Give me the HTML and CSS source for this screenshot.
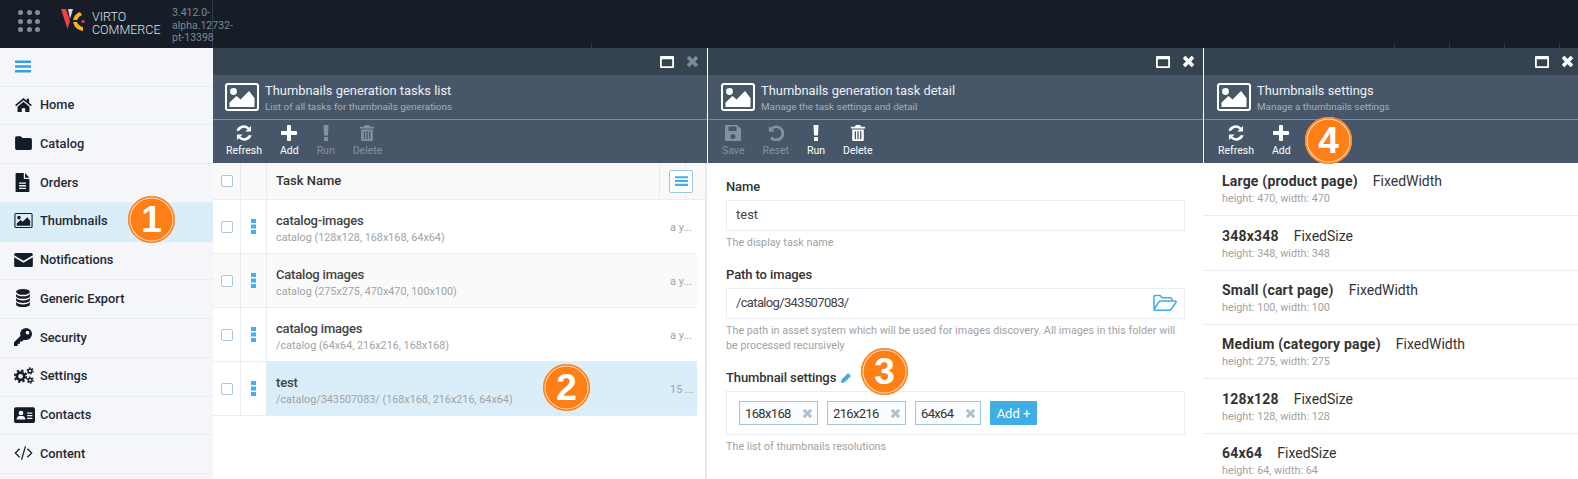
FILE: index.html
```html
<!DOCTYPE html>
<html lang="en">
<head>
<meta charset="utf-8">
<title>Thumbnails</title>
<link rel="stylesheet" href="styles.css">
</head>
<body>
<svg class="defs" xmlns="http://www.w3.org/2000/svg">
  <symbol id="i-home" viewBox="0 0 24 20"><path d="M12 0 0 10l1.5 1.8L12 3.2l10.500 8.600L24 10l-4-3.300V1h-3.500v2.800zM3.500 12.500V20h6v-5.500h5V20h6v-7.500L12 5.500z"/></symbol>
  <symbol id="i-folder" viewBox="0 0 24 20"><path d="M0 3a2.500 2.500 0 0 1 2.500-2.500h5.500L10.500 3h11A2.500 2.500 0 0 1 24 5.500v12a2.500 2.500 0 0 1-2.500 2.500h-19A2.500 2.500 0 0 1 0 17.500z"/></symbol>
  <symbol id="i-file" viewBox="0 0 16 22"><path fill-rule="evenodd" d="M1 0h8.500v7H16v14a1 1 0 0 1-1 1H1a1 1 0 0 1-1-1V1a1 1 0 0 1 1-1zM4 11v1.500h8V11zm0 3v1.500h8V14zm0 3v1.500h8V17z"/><path d="M11 0l5 5.500h-5z"/></symbol>
  <symbol id="i-pic" viewBox="0 0 34 28"><rect x="1" y="1" width="32" height="26" rx="2" fill="none" stroke="currentColor" stroke-width="2"/><circle cx="8.500" cy="8.500" r="3.400"/><path d="M4.500 24v-4.500l7-6.500 4 3.500L24 8l5.500 7v9z"/></symbol>
  <symbol id="i-env" viewBox="0 0 24 18"><path d="M2 0h20a2 2 0 0 1 2 2v1L12 10 0 3V2a2 2 0 0 1 2-2zM0 5.500l12 7 12-7V16a2 2 0 0 1-2 2H2a2 2 0 0 1-2-2z"/></symbol>
  <symbol id="i-db" viewBox="0 0 18 22"><ellipse cx="9" cy="3.500" rx="8.500" ry="3.500"/><path d="M.5 6v2.500c0 2 3.800 3.500 8.500 3.500s8.500-1.500 8.500-3.500V6c-1 2-4.500 3-8.500 3S1.500 8 .5 6zM.5 11v2.500c0 2 3.800 3.500 8.500 3.500s8.500-1.500 8.500-3.500V11c-1 2-4.500 3-8.500 3s-7.500-1-8.500-3zM.5 16v2.500c0 2 3.800 3.500 8.500 3.500s8.500-1.500 8.500-3.500V16c-1 2-4.500 3-8.500 3s-7.500-1-8.500-3z"/></symbol>
  <symbol id="i-key" viewBox="0 0 24 24"><path fill-rule="evenodd" d="M16 0a8 8 0 0 1 0 16c-1 0-2-.2-2.800-.5L11 18H8v3H5v3H0v-5l8.500-8.500A8 8 0 0 1 16 0zm2 3.500a2.500 2.500 0 1 0 0 5 2.500 2.500 0 0 0 0-5z"/></symbol>
  <symbol id="i-cogs" viewBox="0 0 26 22">
    <circle cx="8.500" cy="12" r="4.800" fill="none" stroke="currentColor" stroke-width="3.400"/>
    <circle cx="8.500" cy="12" r="7.400" fill="none" stroke="currentColor" stroke-width="2.600" stroke-dasharray="3 2.810"/>
    <circle cx="21" cy="5" r="2.400" fill="none" stroke="currentColor" stroke-width="1.800"/>
    <circle cx="21" cy="5" r="3.900" fill="none" stroke="currentColor" stroke-width="1.600" stroke-dasharray="2 2.080"/>
    <circle cx="21" cy="17" r="2.400" fill="none" stroke="currentColor" stroke-width="1.800"/>
    <circle cx="21" cy="17" r="3.900" fill="none" stroke="currentColor" stroke-width="1.600" stroke-dasharray="2 2.080"/>
  </symbol>
  <symbol id="i-card" viewBox="0 0 24 18"><path fill-rule="evenodd" d="M2 0h20a2 2 0 0 1 2 2v14a2 2 0 0 1-2 2H2a2 2 0 0 1-2-2V2a2 2 0 0 1 2-2zm6 4a2.700 2.700 0 1 0 0 5.400A2.700 2.700 0 0 0 8 4zM3 14h10c0-2.500-1.500-4-3-4H6c-1.500 0-3 1.500-3 4zm12-8v1.500h6V6zm0 3v1.500h6V9zm0 3v1.500h6V12z"/></symbol>
  <symbol id="i-code" viewBox="0 0 24 18"><path fill="none" stroke="currentColor" stroke-width="1.600" d="M7 3.500 1.500 9 7 14.500M17 3.500 22.500 9 17 14.500M14.500 .5 9.500 17.500"/></symbol>
  <symbol id="i-refresh" viewBox="1.500 1.500 17 17"><path d="M17.500 2.500V8.500h-6l2.300-2.300A5.500 5.500 0 0 0 5 7.500H2a8 8 0 0 1 13.500-3.200zM2.500 17.500v-6h6l-2.300 2.300A5.500 5.500 0 0 0 15 12.500h3a8 8 0 0 1-13.500 3.200z"/></symbol>
  <symbol id="i-plus" viewBox="0 0 16 16"><path d="M6 1a1 1 0 0 1 1-1h2a1 1 0 0 1 1 1v5h5a1 1 0 0 1 1 1v2a1 1 0 0 1-1 1h-5v5a1 1 0 0 1-1 1H7a1 1 0 0 1-1-1v-5H1a1 1 0 0 1-1-1V7a1 1 0 0 1 1-1h5z"/></symbol>
  <symbol id="i-excl" viewBox="0 0 6 16"><path d="M.5 0h5l-.5 10.500H1zM1 12h4v4H1z"/></symbol>
  <symbol id="i-trash" viewBox="0 0 16 18"><path fill-rule="evenodd" d="M5.500 0h5l1 2H16v2H0V2h4.500zM1.500 5h13v12a1 1 0 0 1-1 1h-11a1 1 0 0 1-1-1zM4.300 7v9h1.500V7zm3 0v9h1.500V7zm3 0v9h1.500V7z"/></symbol>
  <symbol id="i-save" viewBox="0 0 16 16"><path fill-rule="evenodd" d="M1 0h11l4 4v11a1 1 0 0 1-1 1H1a1 1 0 0 1-1-1V1a1 1 0 0 1 1-1zm2.500 1.500V6h8V1.500zM8 9a2.500 2.500 0 1 0 0 5 2.500 2.500 0 0 0 0-5z"/></symbol>
  <symbol id="i-undo" viewBox="0 0 18 18"><path d="M1 1v6.500h6.500L5 5a6 6 0 1 1-.5 8L2.300 15.300A9 9 0 1 0 3 3z"/></symbol>
  <symbol id="i-open" viewBox="0 0 24 17"><path fill="none" stroke="currentColor" stroke-width="1.500" stroke-linejoin="round" d="M1 14V2.200A1.200 1.200 0 0 1 2.200 1h5l1.800 2.200h8.500a1.200 1.200 0 0 1 1.200 1.200V6.500M1.800 15.800h15.400L23 8a1 1 0 0 0-1-1.500H7.500a2 2 0 0 0-1.700 1L1 15z"/></symbol>
  <symbol id="i-pen" viewBox="0 0 12 12"><path d="M8.500 0 12 3.500 4 11.500 0 12l.5-4z"/></symbol>
  <symbol id="i-x" viewBox="0 0 12 12"><path d="M3.200.4 6 3.200 8.800.4a1 1 0 0 1 1.400 0l1.400 1.400a1 1 0 0 1 0 1.400L8.800 6l2.800 2.800a1 1 0 0 1 0 1.400l-1.400 1.400a1 1 0 0 1-1.400 0L6 8.800l-2.800 2.800a1 1 0 0 1-1.400 0L.4 10.200a1 1 0 0 1 0-1.400L3.200 6 .4 3.200a1 1 0 0 1 0-1.400L1.800.4a1 1 0 0 1 1.400 0z"/></symbol>
  <symbol id="i-max" viewBox="0 0 14 12"><path fill-rule="evenodd" d="M1 0h12a1 1 0 0 1 1 1v10a1 1 0 0 1-1 1H1a1 1 0 0 1-1-1V1a1 1 0 0 1 1-1zm.8 3.200v7h10.400v-7z"/></symbol>
  <symbol id="i-menu" viewBox="0 0 16 12"><path d="M0 0h16v2.600H0zM0 4.700h16v2.600H0zM0 9.400h16V12H0z"/></symbol>
  <symbol id="i-dots" viewBox="0 0 5 15"><path d="M0 0h5v4H0zM0 5.500h5v4H0zM0 11h5v4H0z"/></symbol>
</svg>

<div class="app">
  <header class="topbar">
    <div class="brand">
      <div class="apps">
        <i></i><i></i><i></i><i></i><i></i><i></i><i></i><i></i><i></i>
      </div>
      <svg class="logo" viewBox="0 0 24 24">
        <path fill="#ef4146" d="M0 0h5l4 12-2.500 8z"/>
        <path fill="#d9d9d9" d="M7 0h5l-3 10z"/>
        <path fill="#f8b417" d="M19 3l2 3a8 8 0 0 0-5 5H12A11 11 0 0 1 19 3zM12 13h4a8 8 0 0 0 6 5v4A12 12 0 0 1 12 13z"/>
        <circle fill="#ef4146" cx="22" cy="12.500" r="1.600"/>
      </svg>
      <div class="wordmark">VIRTO<br>COMMERCE</div>
      <div class="version">3.412.0-<br>alpha.12732-<br>pt-13398</div>
    </div>
    <div class="ticks"><i class="t1"></i><i class="t2"></i><i class="t3"></i><i class="t4"></i><i class="t5"></i></div>
  </header>

  <div class="main">
    <nav class="sidebar">
      <div class="burger"><svg class="ic-burger"><use href="#i-menu"/></svg></div>
      <a class="nav"><span class="nav-ic"><svg class="n16"><use href="#i-home"/></svg></span>Home</a>
      <a class="nav"><span class="nav-ic"><svg class="n17"><use href="#i-folder"/></svg></span>Catalog</a>
      <a class="nav"><span class="nav-ic"><svg class="n-file"><use href="#i-file"/></svg></span>Orders</a>
      <a class="nav active"><span class="nav-ic"><svg class="n-pic"><use href="#i-pic"/></svg></span>Thumbnails</a>
      <a class="nav"><span class="nav-ic"><svg class="n18"><use href="#i-env"/></svg></span>Notifications</a>
      <a class="nav"><span class="nav-ic"><svg class="n-db"><use href="#i-db"/></svg></span>Generic Export</a>
      <a class="nav"><span class="nav-ic"><svg class="n-key"><use href="#i-key"/></svg></span>Security</a>
      <a class="nav"><span class="nav-ic"><svg class="n-cogs"><use href="#i-cogs"/></svg></span>Settings</a>
      <a class="nav"><span class="nav-ic"><svg class="n-card"><use href="#i-card"/></svg></span>Contacts</a>
      <a class="nav"><span class="nav-ic"><svg class="n18"><use href="#i-code"/></svg></span>Content</a>
    </nav>

    <section class="blade first">
      <div class="blade-top">
        <svg class="win"><use href="#i-max"/></svg>
        <svg class="close dim"><use href="#i-x"/></svg>
      </div>
      <div class="blade-title">
        <svg class="blade-ic"><use href="#i-pic"/></svg>
        <div>
          <div class="t-main">Thumbnails generation tasks list</div>
          <div class="t-sub">List of all tasks for thumbnails generations</div>
        </div>
      </div>
      <div class="toolbar">
        <div class="tool"><svg class="tic"><use href="#i-refresh"/></svg>Refresh</div>
        <div class="tool"><svg class="tic"><use href="#i-plus"/></svg>Add</div>
        <div class="tool off"><svg class="tic"><use href="#i-excl"/></svg>Run</div>
        <div class="tool off"><svg class="tic"><use href="#i-trash"/></svg>Delete</div>
      </div>
      <div class="blade-body table">
        <div class="thead">
          <div class="cell-check"><span class="check"></span></div>
          <div class="cell-menu"></div>
          <div class="th-name">Task Name</div>
          <div class="th-date"><span class="columns-btn"><svg class="ic-columns"><use href="#i-menu"/></svg></span></div>
        </div>
        <div class="row">
          <div class="cell-check"><span class="check"></span></div>
          <div class="cell-menu"><svg class="dots"><use href="#i-dots"/></svg></div>
          <div class="cell-name"><div class="r-title">catalog-images</div><div class="r-sub">catalog (128x128, 168x168, 64x64)</div></div>
          <div class="cell-date">a y...</div>
        </div>
        <div class="row alt">
          <div class="cell-check"><span class="check"></span></div>
          <div class="cell-menu"><svg class="dots"><use href="#i-dots"/></svg></div>
          <div class="cell-name"><div class="r-title">Catalog images</div><div class="r-sub">catalog (275x275, 470x470, 100x100)</div></div>
          <div class="cell-date">a y...</div>
        </div>
        <div class="row">
          <div class="cell-check"><span class="check"></span></div>
          <div class="cell-menu"><svg class="dots"><use href="#i-dots"/></svg></div>
          <div class="cell-name"><div class="r-title">catalog images</div><div class="r-sub">/catalog (64x64, 216x216, 168x168)</div></div>
          <div class="cell-date">a y...</div>
        </div>
        <div class="row selected">
          <div class="cell-check"><span class="check"></span></div>
          <div class="cell-menu"><svg class="dots"><use href="#i-dots"/></svg></div>
          <div class="cell-name"><div class="r-title">test</div><div class="r-sub">/catalog/343507083/ (168x168, 216x216, 64x64)</div></div>
          <div class="cell-date">15 ...</div>
        </div>
      </div>
    </section>

    <section class="blade">
      <div class="blade-top">
        <svg class="win"><use href="#i-max"/></svg>
        <svg class="close"><use href="#i-x"/></svg>
      </div>
      <div class="blade-title">
        <svg class="blade-ic"><use href="#i-pic"/></svg>
        <div>
          <div class="t-main">Thumbnails generation task detail</div>
          <div class="t-sub">Manage the task settings and detail</div>
        </div>
      </div>
      <div class="toolbar">
        <div class="tool off"><svg class="tic"><use href="#i-save"/></svg>Save</div>
        <div class="tool off"><svg class="tic"><use href="#i-undo"/></svg>Reset</div>
        <div class="tool"><svg class="tic"><use href="#i-excl"/></svg>Run</div>
        <div class="tool"><svg class="tic"><use href="#i-trash"/></svg>Delete</div>
      </div>
      <div class="blade-body form">
        <div class="label">Name</div>
        <div class="input">test</div>
        <div class="help">The display task name</div>
        <div class="label">Path to images</div>
        <div class="input path"><span class="digits">/catalog/343507083/</span><svg class="ic-open"><use href="#i-open"/></svg></div>
        <div class="help">The path in asset system which will be used for images discovery. All images in this folder will be processed recursively</div>
        <div class="label">Thumbnail settings <svg class="ic-pen"><use href="#i-pen"/></svg></div>
        <div class="tags">
          <span class="tag w79"><span class="digits">168x168</span><svg class="tag-x"><use href="#i-x"/></svg></span>
          <span class="tag w79"><span class="digits">216x216</span><svg class="tag-x"><use href="#i-x"/></svg></span>
          <span class="tag w66"><span class="digits">64x64</span><svg class="tag-x"><use href="#i-x"/></svg></span>
          <span class="add-btn">Add +</span>
        </div>
        <div class="help">The list of thumbnails resolutions</div>
      </div>
    </section>

    <section class="blade last">
      <div class="blade-top">
        <svg class="win"><use href="#i-max"/></svg>
        <svg class="close"><use href="#i-x"/></svg>
      </div>
      <div class="blade-title">
        <svg class="blade-ic"><use href="#i-pic"/></svg>
        <div>
          <div class="t-main">Thumbnails settings</div>
          <div class="t-sub">Manage a thumbnails settings</div>
        </div>
      </div>
      <div class="toolbar">
        <div class="tool"><svg class="tic"><use href="#i-refresh"/></svg>Refresh</div>
        <div class="tool"><svg class="tic"><use href="#i-plus"/></svg>Add</div>
      </div>
      <div class="blade-body list">
        <div class="item"><div class="i-title"><b>Large (product page)</b>FixedWidth</div><div class="i-sub">height: 470, width: 470</div></div>
        <div class="item"><div class="i-title"><b>348x348</b>FixedSize</div><div class="i-sub">height: 348, width: 348</div></div>
        <div class="item"><div class="i-title"><b>Small (cart page)</b>FixedWidth</div><div class="i-sub">height: 100, width: 100</div></div>
        <div class="item"><div class="i-title"><b>Medium (category page)</b>FixedWidth</div><div class="i-sub">height: 275, width: 275</div></div>
        <div class="item"><div class="i-title"><b>128x128</b>FixedSize</div><div class="i-sub">height: 128, width: 128</div></div>
        <div class="item"><div class="i-title"><b>64x64</b>FixedSize</div><div class="i-sub">height: 64, width: 64</div></div>
      </div>
    </section>
  </div>
</div>

<div class="badge b1">1</div>
<div class="badge b2">2</div>
<div class="badge b3">3</div>
<div class="badge b4">4</div>
</body>
</html>
```

FILE: styles.css
```css
* { box-sizing: border-box; }
html, body { height: 100%; }
body {
  margin: 0;
  overflow: hidden;
  font-family: Roboto, "Liberation Sans", sans-serif;
  color: #333;
  background: #fff;
}
svg { fill: currentColor; display: block; }
.defs { display: none; }

.app { display: flex; flex-direction: column; height: 479px; }

/* top bar */
.topbar {
  height: 48px;
  flex: none;
  background: #161d27;
  display: flex;
}
.brand {
  width: 213px;
  flex: none;
  border-right: 1px solid #2e3b4d;
  display: flex;
  align-items: flex-start;
  padding: 10px 0 0 18px;
  white-space: nowrap;
}
.apps {
  display: grid;
  grid-template-columns: repeat(3, 5px);
  grid-auto-rows: 5px;
  gap: 3.5px;
  width: 22px;
  flex: none;
}
.apps i { background: #878e98; border-radius: 50%; }
.logo { width: 24px; height: 24px; margin: -1px 0 0 21px; flex: none; }
.wordmark {
  margin: 0 0 0 7px;
  font-weight: 300;
  font-size: 12.500px;
  line-height: 13px;
  color: #dfe3e8;
  width: 80px;
  flex: none;
}
.version {
  margin-top: -3px;
  font-size: 10.500px;
  line-height: 12.500px;
  color: #7d8894;
  width: 40px;
}
.ticks {
  flex: 1;
  display: flex;
  align-items: flex-end;
}
.ticks i { width: 1px; height: 5px; background: #2e3b4d; display: block; }
.t1 { margin-left: 378px; }
.t2 { margin-left: 802px; }
.t3, .t4, .t5 { margin-left: 54px; }

.main {
  flex: 1;
  display: grid;
  grid-template-columns: 213px 494px 496px 375px;
  min-height: 0;
}

/* sidebar */
.sidebar {
  background: #f4f6fa;
  overflow: hidden;
}
.burger {
  height: 38.700px;
  border-bottom: 1px solid #e9ecf2;
  display: flex;
  align-items: center;
  padding-left: 15px;
}
.ic-burger { width: 16px; height: 13px; color: #3b9fd8; }
.nav {
  height: 38.760px;
  display: flex;
  align-items: center;
  border-bottom: 1px solid #e9ecf2;
  padding: 0 0 2px 14px;
  font-size: 12.800px;
  font-weight: 500;
  color: #1e2937;
}
.nav.active { background: #d9eef9; border-bottom-color: #d9eef9; }
.nav-ic {
  width: 26px;
  flex: none;
  display: flex;
  align-items: center;
  color: #141c28;
}
.n16 { width: 17px; height: 14px; margin-left: 1px; }
.n17 { width: 17px; height: 14px; margin-left: 1px; }
.n-file { width: 15px; height: 19px; margin-left: 1px; }
.n-pic { width: 19px; height: 15px; }
.n18 { width: 19px; height: 14px; }
.n-db { width: 16px; height: 18px; margin-left: 1px; }
.n-key { width: 18px; height: 18px; }
.n-cogs { width: 20px; height: 17px; }
.n-card { width: 21px; height: 16px; }

/* blade */
.blade { display: flex; flex-direction: column; min-width: 0; border-left: 1px solid #fff; }
.blade.first { border-left: 0; }
.blade-top {
  height: 27px;
  flex: none;
  background: #35424f;
  display: flex;
  align-items: center;
  justify-content: flex-end;
  padding-right: 9px;
  gap: 13px;
  color: #fff;
}
.last .blade-top { padding-right: 5px; }
.win { width: 14px; height: 12px; }
.close { width: 11px; height: 11px; }
.close.dim { color: #7d8a97; }
.blade-title {
  height: 45px;
  flex: none;
  background: #475769;
  border-bottom: 1px solid #7e8a98;
  display: flex;
  align-items: center;
  padding-left: 13px;
  gap: 6px;
}
.first .blade-title { padding-left: 12px; }
.blade-ic { width: 34px; height: 28px; color: #fff; flex: none; }
.t-main { font-size: 12.900px; line-height: 17px; color: #eef1f4; padding-top: 1px; }
.t-sub { font-size: 9.900px; line-height: 14px; color: #a4aeb9; margin-top: 1px; }
.toolbar {
  height: 43px;
  flex: none;
  background: #475769;
  display: flex;
  padding-left: 5px;
}
.first .toolbar { padding-left: 4px; }
.tool {
  padding: 5px 9px 0;
  font-size: 10.500px;
  line-height: 13px;
  color: #fff;
  display: flex;
  flex-direction: column;
  align-items: center;
}
.tic { width: 16px; height: 16px; margin-bottom: 3px; }
.tool.off { color: #8591a0; }
.blade-body { flex: 1; min-height: 0; overflow: hidden; background: #fff; }

/* table */
.table { border-right: 2px solid #e4e8f1; }
.thead {
  display: grid;
  height: 37px;
  background: #f9f9f9;
  border-bottom: 1px solid #e9ecf3;
  grid-template-columns: 28px 26px 1fr 45px;
}
.row {
  display: grid;
  height: 54px;
  width: 484px;
  grid-template-columns: 28px 26px 1fr 32px;
  border-bottom: 1px solid #e9ecf3;
  background: #fff;
}
.row.alt { background: #fafafa; }
.cell-check, .cell-menu {
  display: flex;
  align-items: center;
  justify-content: center;
  border-right: 1px solid #e9ecf3;
}
.row .cell-check, .row .cell-menu { background: #fff; }
.row.alt .cell-check, .row.alt .cell-menu { background: #fafafa; }
.check {
  width: 12px;
  height: 12px;
  border: 1px solid #a9c7dc;
  border-radius: 2px;
  background: #fff;
}
.dots { width: 5px; height: 15px; color: #41b1ee; }
.th-name {
  font-size: 13px;
  font-weight: 500;
  color: #333;
  display: flex;
  align-items: center;
  padding: 0 0 1px 9px;
  border-right: 1px solid #e9ecf3;
}
.th-date {
  display: flex;
  align-items: center;
  padding-left: 9px;
  background: linear-gradient(#e9ecf3, #e9ecf3) 25px 0 / 1px 100% no-repeat;
}
.columns-btn {
  width: 24px;
  height: 23px;
  border: 1px solid #9cc7df;
  border-radius: 2px;
  background: #fff;
  display: flex;
  align-items: center;
  justify-content: center;
}
.ic-columns { width: 13px; height: 10px; color: #41b1ee; }
.cell-name { padding: 13px 0 0 9px; }
.r-title { font-size: 13px; line-height: 15px; font-weight: 500; letter-spacing: -.2px; color: #444; }
.r-sub { font-size: 10.800px; line-height: 15px; color: #a2a2a2; margin-top: 2px; }
.cell-date { font-size: 11px; color: #a2a2a2; padding: 21px 0 0 5px; white-space: nowrap; }
.row.selected { background: #d9eef9; }

/* form */
.form { padding: 15px 18px 0; }
.label {
  font-size: 13px;
  line-height: 15px;
  padding-top: 1px;
  font-weight: 500;
  letter-spacing: -.1px;
  color: #333;
  display: flex;
  align-items: center;
  gap: 5px;
}
.input {
  height: 31px;
  margin-top: 6px;
  border: 1px solid #e9ecf3;
  font-size: 13px;
  padding: 0 0 2px 9px;
  color: #444;
  display: flex;
  justify-content: space-between;
  align-items: center;
}
.digits { letter-spacing: -.650px; }
.ic-open { width: 24px; height: 18px; color: #41ade6; margin-right: 7px; }
.help {
  font-size: 10.800px;
  line-height: 15px;
  color: #a2a2a2;
  margin: 4px 0 16px;
}
.ic-pen { width: 10px; height: 10px; color: #41ade6; }
.tags {
  margin-top: 6px;
  height: 44px;
  border: 1px solid #e9ecf3;
  display: flex;
  align-items: center;
  padding-left: 12px;
  gap: 9px;
}
.tag {
  height: 24px;
  border: 1px solid #a4c4d8;
  background: #fbfcfe;
  font-size: 13px;
  color: #333;
  display: flex;
  align-items: center;
  justify-content: space-between;
  padding: 0 5px 0 5px;
}
.w79 { width: 79px; }
.w66 { width: 66px; }
.tag-x { width: 9px; height: 9px; color: #adc3d3; }
.add-btn {
  width: 47px;
  height: 24px;
  background: #41ade6;
  border-radius: 1px;
  font-size: 13px;
  color: #fff;
  display: flex;
  align-items: center;
  justify-content: center;
}

/* list */
.item {
  height: 54.300px;
  padding: 10.500px 0 0 18px;
  border-bottom: 1px solid #e9ecf3;
}
.item:first-child { height: 53.400px; padding-top: 9px; }
.i-title { font-size: 14px; line-height: 18px; color: #333; }
.i-title b { font-weight: 700; letter-spacing: .2px; margin-right: 15px; }
.i-sub { font-size: 10.800px; line-height: 15px; color: #a2a2a2; margin-top: 1px; }

/* callouts */
.badge {
  position: absolute;
  width: 47px;
  height: 47px;
  border-radius: 50%;
  background: #ff7f17;
  box-shadow: inset 0 0 0 1.500px #ff7f17, inset 0 0 0 2.500px rgba(255,255,255,.75);
  color: #fff;
  font-family: "Liberation Sans", Arial, sans-serif;
  font-weight: 700;
  font-size: 37px;
  line-height: 47px;
  text-align: center;
}
.b1 { left: 128px; top: 196px; }
.b2 { left: 543px; top: 364px; }
.b3 { left: 861px; top: 348px; }
.b4 { left: 1305px; top: 117px; }
```
